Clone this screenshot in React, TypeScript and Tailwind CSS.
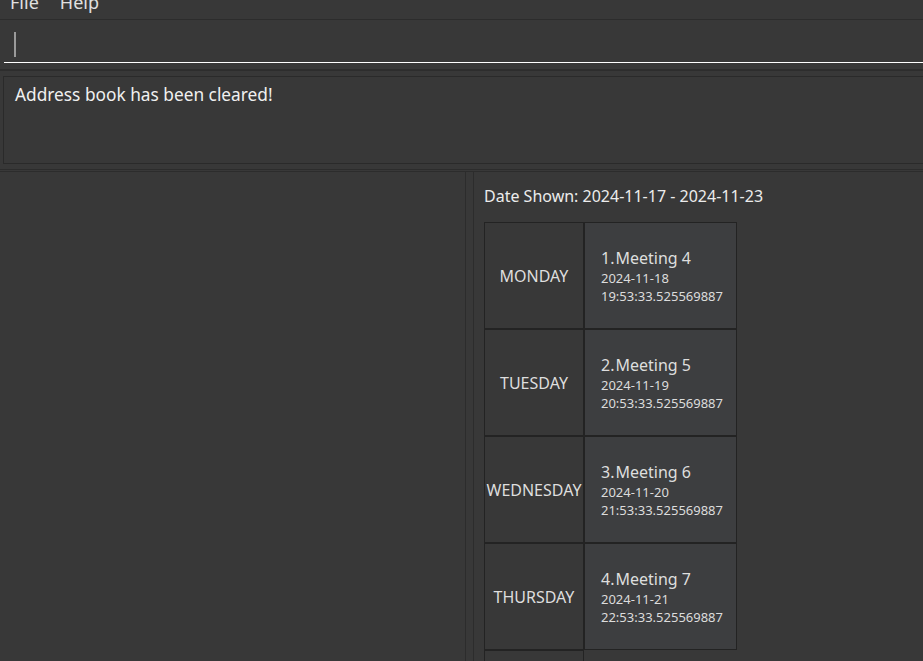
import React from "react";

const rows = [
  { day: "MONDAY", n: "1.", title: "Meeting 4", date: "2024-11-18", time: "19:53:33.525569887" },
  { day: "TUESDAY", n: "2.", title: "Meeting 5", date: "2024-11-19", time: "20:53:33.525569887" },
  { day: "WEDNESDAY", n: "3.", title: "Meeting 6", date: "2024-11-20", time: "21:53:33.525569887" },
  { day: "THURSDAY", n: "4.", title: "Meeting 7", date: "2024-11-21", time: "22:53:33.525569887" },
];

export default function App() {
  return (
    <div className="w-[923px] h-[661px] overflow-hidden bg-[#383838] font-['Noto_Sans',sans-serif] text-[#e6e6e6] flex flex-col">
      {/* Menu bar */}
      <div className="h-[20px] shrink-0 border-b border-[#2c2c2c] flex items-start overflow-hidden">
        <span className="ml-[10px] mt-[-7px] text-[18px] leading-[18px] text-[#e0e0e0]">File</span>
        <span className="ml-[21px] mt-[-7px] text-[18px] leading-[18px] text-[#e0e0e0]">Help</span>
      </div>

      {/* Command box */}
      <div className="shrink-0 flex flex-col">
        <div className="ml-[14px] mt-[12px] w-[2px] h-[25px] bg-[#9a9a9a]" />
        <div className="ml-[4px] mt-[5px] h-[1px] bg-white" />
        <div className="mt-[6px] h-[2px] bg-[#2d2d2d]" />
      </div>

      {/* Result box */}
      <div className="shrink-0 ml-[3px] mr-[-10px] mt-[5px] h-[88px] border border-[#2a2a2a] pl-[11px] pt-[6px]">
        <div className="text-[17.3px] leading-[1.36] text-[#f0f0f0]">Address book has been cleared!</div>
      </div>

      <div className="shrink-0 mt-[5px] h-[1px] bg-[#2c2c2c]" />
      <div className="shrink-0 mt-[1px] h-[1px] bg-[#2c2c2c]" />

      {/* Split pane */}
      <div className="flex-1 flex min-h-0">
        <div className="w-[465px] shrink-0" />
        <div className="w-[1px] bg-[#2c2c2c] shrink-0" />
        <div className="w-[7px] shrink-0" />
        <div className="w-[1px] bg-[#2c2c2c] shrink-0" />
        <div className="flex-1 flex flex-col pl-[10px] pt-[14px] overflow-hidden">
          <div className="text-[16px] leading-[1.36] text-[#ececec]">Date Shown: 2024-11-17 - 2024-11-23</div>
          <div className="mt-[14px] flex flex-col">
            {rows.map((r) => (
              <div key={r.day} className="flex h-[107px]">
                <div className="w-[100px] h-[107px] border border-[#232323] flex items-center justify-center pt-[4px] text-[16px] leading-[1.36] text-[#dedede]">
                  {r.day}
                </div>
                <div className="w-[153px] h-[107px] border border-[#232323] bg-[#3d3e40] flex flex-col justify-center pl-[16px] pt-[4px]">
                  <div className="text-[16px] leading-[1.36] text-[#dedede]">
                    <span>{r.n}</span>
                    <span className="ml-[1px]">{r.title}</span>
                  </div>
                  <div className="text-[13px] leading-[1.38] text-[#dcdcdc]">{r.date}</div>
                  <div className="text-[13px] leading-[1.38] text-[#dcdcdc]">{r.time}</div>
                </div>
              </div>
            ))}
            <div className="flex h-[107px]">
              <div className="w-[100px] h-[107px] border border-[#232323]" />
            </div>
          </div>
        </div>
      </div>
    </div>
  );
}
